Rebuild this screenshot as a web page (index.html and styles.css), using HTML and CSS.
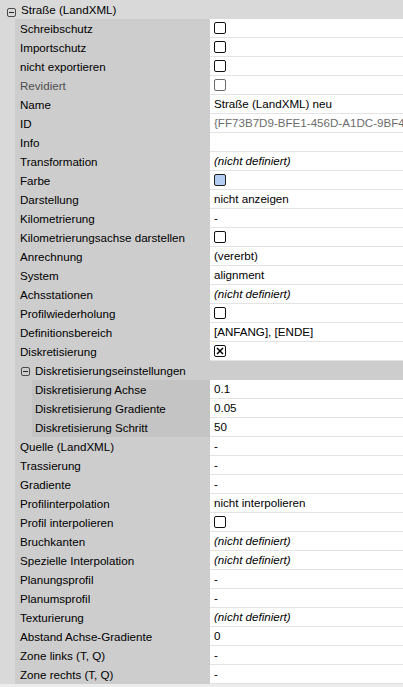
FILE: index.html
```html
<!DOCTYPE html>
<html lang="de">
<head>
<meta charset="utf-8">
<title>Eigenschaften</title>
<link rel="stylesheet" href="styles.css">
</head>
<body>
<div class="grid">
  <div class="cat">
    <span class="toggle"></span><span class="cat-text">Straße (LandXML)</span>
  </div>

  <div class="row"><div class="label">Schreibschutz</div><div class="value"><span class="cb"></span></div></div>
  <div class="row"><div class="label">Importschutz</div><div class="value"><span class="cb"></span></div></div>
  <div class="row"><div class="label">nicht exportieren</div><div class="value"><span class="cb"></span></div></div>
  <div class="row"><div class="label disabled">Revidiert</div><div class="value"><span class="cb cb-disabled"></span></div></div>
  <div class="row"><div class="label">Name</div><div class="value">Straße (LandXML) neu</div></div>
  <div class="row"><div class="label">ID</div><div class="value readonly">{FF73B7D9-BFE1-456D-A1DC-9BF464A3C2D1}</div></div>
  <div class="row"><div class="label">Info</div><div class="value"></div></div>
  <div class="row"><div class="label">Transformation</div><div class="value italic">(nicht definiert)</div></div>
  <div class="row"><div class="label">Farbe</div><div class="value"><span class="swatch"></span></div></div>
  <div class="row"><div class="label">Darstellung</div><div class="value">nicht anzeigen</div></div>
  <div class="row"><div class="label">Kilometrierung</div><div class="value">-</div></div>
  <div class="row"><div class="label">Kilometrierungsachse darstellen</div><div class="value"><span class="cb"></span></div></div>
  <div class="row"><div class="label">Anrechnung</div><div class="value">(vererbt)</div></div>
  <div class="row"><div class="label">System</div><div class="value">alignment</div></div>
  <div class="row"><div class="label">Achsstationen</div><div class="value italic">(nicht definiert)</div></div>
  <div class="row"><div class="label">Profilwiederholung</div><div class="value"><span class="cb"></span></div></div>
  <div class="row"><div class="label">Definitionsbereich</div><div class="value">[ANFANG], [ENDE]</div></div>
  <div class="row"><div class="label">Diskretisierung</div><div class="value"><span class="cb cb-checked"><svg width="12" height="12" viewBox="0 0 12 12"><path d="M3 3 L9 9 M9 3 L3 9" stroke="#000" stroke-width="1.5" fill="none"/></svg></span></div></div>

  <div class="subcat">
    <span class="toggle"></span><span class="cat-text">Diskretisierungseinstellungen</span>
  </div>
  <div class="row sub"><div class="label">Diskretisierung Achse</div><div class="value">0.1</div></div>
  <div class="row sub"><div class="label">Diskretisierung Gradiente</div><div class="value">0.05</div></div>
  <div class="row sub"><div class="label">Diskretisierung Schritt</div><div class="value">50</div></div>

  <div class="row"><div class="label">Quelle (LandXML)</div><div class="value">-</div></div>
  <div class="row"><div class="label">Trassierung</div><div class="value">-</div></div>
  <div class="row"><div class="label">Gradiente</div><div class="value">-</div></div>
  <div class="row"><div class="label">Profilinterpolation</div><div class="value">nicht interpolieren</div></div>
  <div class="row"><div class="label">Profil interpolieren</div><div class="value"><span class="cb"></span></div></div>
  <div class="row"><div class="label">Bruchkanten</div><div class="value italic">(nicht definiert)</div></div>
  <div class="row"><div class="label">Spezielle Interpolation</div><div class="value italic">(nicht definiert)</div></div>
  <div class="row"><div class="label">Planungsprofil</div><div class="value">-</div></div>
  <div class="row"><div class="label">Planumsprofil</div><div class="value">-</div></div>
  <div class="row"><div class="label">Texturierung</div><div class="value italic">(nicht definiert)</div></div>
  <div class="row"><div class="label">Abstand Achse-Gradiente</div><div class="value">0</div></div>
  <div class="row"><div class="label">Zone links (T, Q)</div><div class="value">-</div></div>
  <div class="row"><div class="label">Zone rechts (T, Q)</div><div class="value">-</div></div>
</div>
</body>
</html>
```
FILE: styles.css
```css
html, body {
  margin: 0;
  padding: 0;
  background: #ececec;
}
body {
  font-family: "Liberation Sans", Arial, sans-serif;
  font-size: 11.6px;
  color: #000;
  overflow: hidden;
}
.grid {
  width: 403px;
  display: flex;
  flex-direction: column;
}
.cat {
  height: 19px;
  background: #d9d9d9;
  display: flex;
  align-items: center;
  padding-left: 7px;
}
.cat .toggle {
  margin-top: 5px;
}
.subcat {
  height: 19px;
  background: linear-gradient(to right, #d9d9d9 0, #d9d9d9 15px, #cdcdcd 15px);
  padding-left: 21px;
  display: flex;
  align-items: center;
}
.subcat .toggle {
  margin-top: 1px;
}
.toggle {
  box-sizing: border-box;
  width: 9px;
  height: 9px;
  border: 1px solid #4a4a4a;
  border-radius: 2px;
  position: relative;
  flex: none;
  margin-right: 5px;
}
.toggle::after {
  content: "";
  position: absolute;
  left: 1px;
  right: 1px;
  top: 3px;
  height: 1px;
  background: #222;
}
.cat-text {
  white-space: nowrap;
}
.row {
  height: 19px;
  display: flex;
  padding-left: 15px;
  background: #d9d9d9;
}
.label {
  width: 195px;
  flex: none;
  background: #cdcdcd;
  box-sizing: border-box;
  padding-left: 5px;
  line-height: 19px;
  white-space: nowrap;
  overflow: hidden;
}
.row.sub .label {
  border-left: 17px solid #cdcdcd;
  background: #c4c4c4;
  padding-left: 3px;
}
.label.disabled {
  color: #4d4d4d;
}
.value {
  flex: 1;
  min-width: 0;
  height: 18px;
  background: #fff;
  border-bottom: 1px solid #e3e3e3;
  padding-left: 4px;
  line-height: 18px;
  white-space: nowrap;
  overflow: hidden;
  display: flex;
  align-items: center;
}
.value.readonly {
  color: #6d6d6d;
}
.value.italic {
  font-style: italic;
}
.cb, .swatch {
  box-sizing: border-box;
  width: 12px;
  height: 12px;
  border: 1px solid #111;
  border-radius: 2px;
  background: #fff;
  display: inline-block;
  position: relative;
}
.cb svg {
  position: absolute;
  left: -1px;
  top: -1px;
}
.cb-disabled {
  border-color: #6d6d6d;
}
.swatch {
  background: #b3cdf2;
  border-color: #222;
}
```
